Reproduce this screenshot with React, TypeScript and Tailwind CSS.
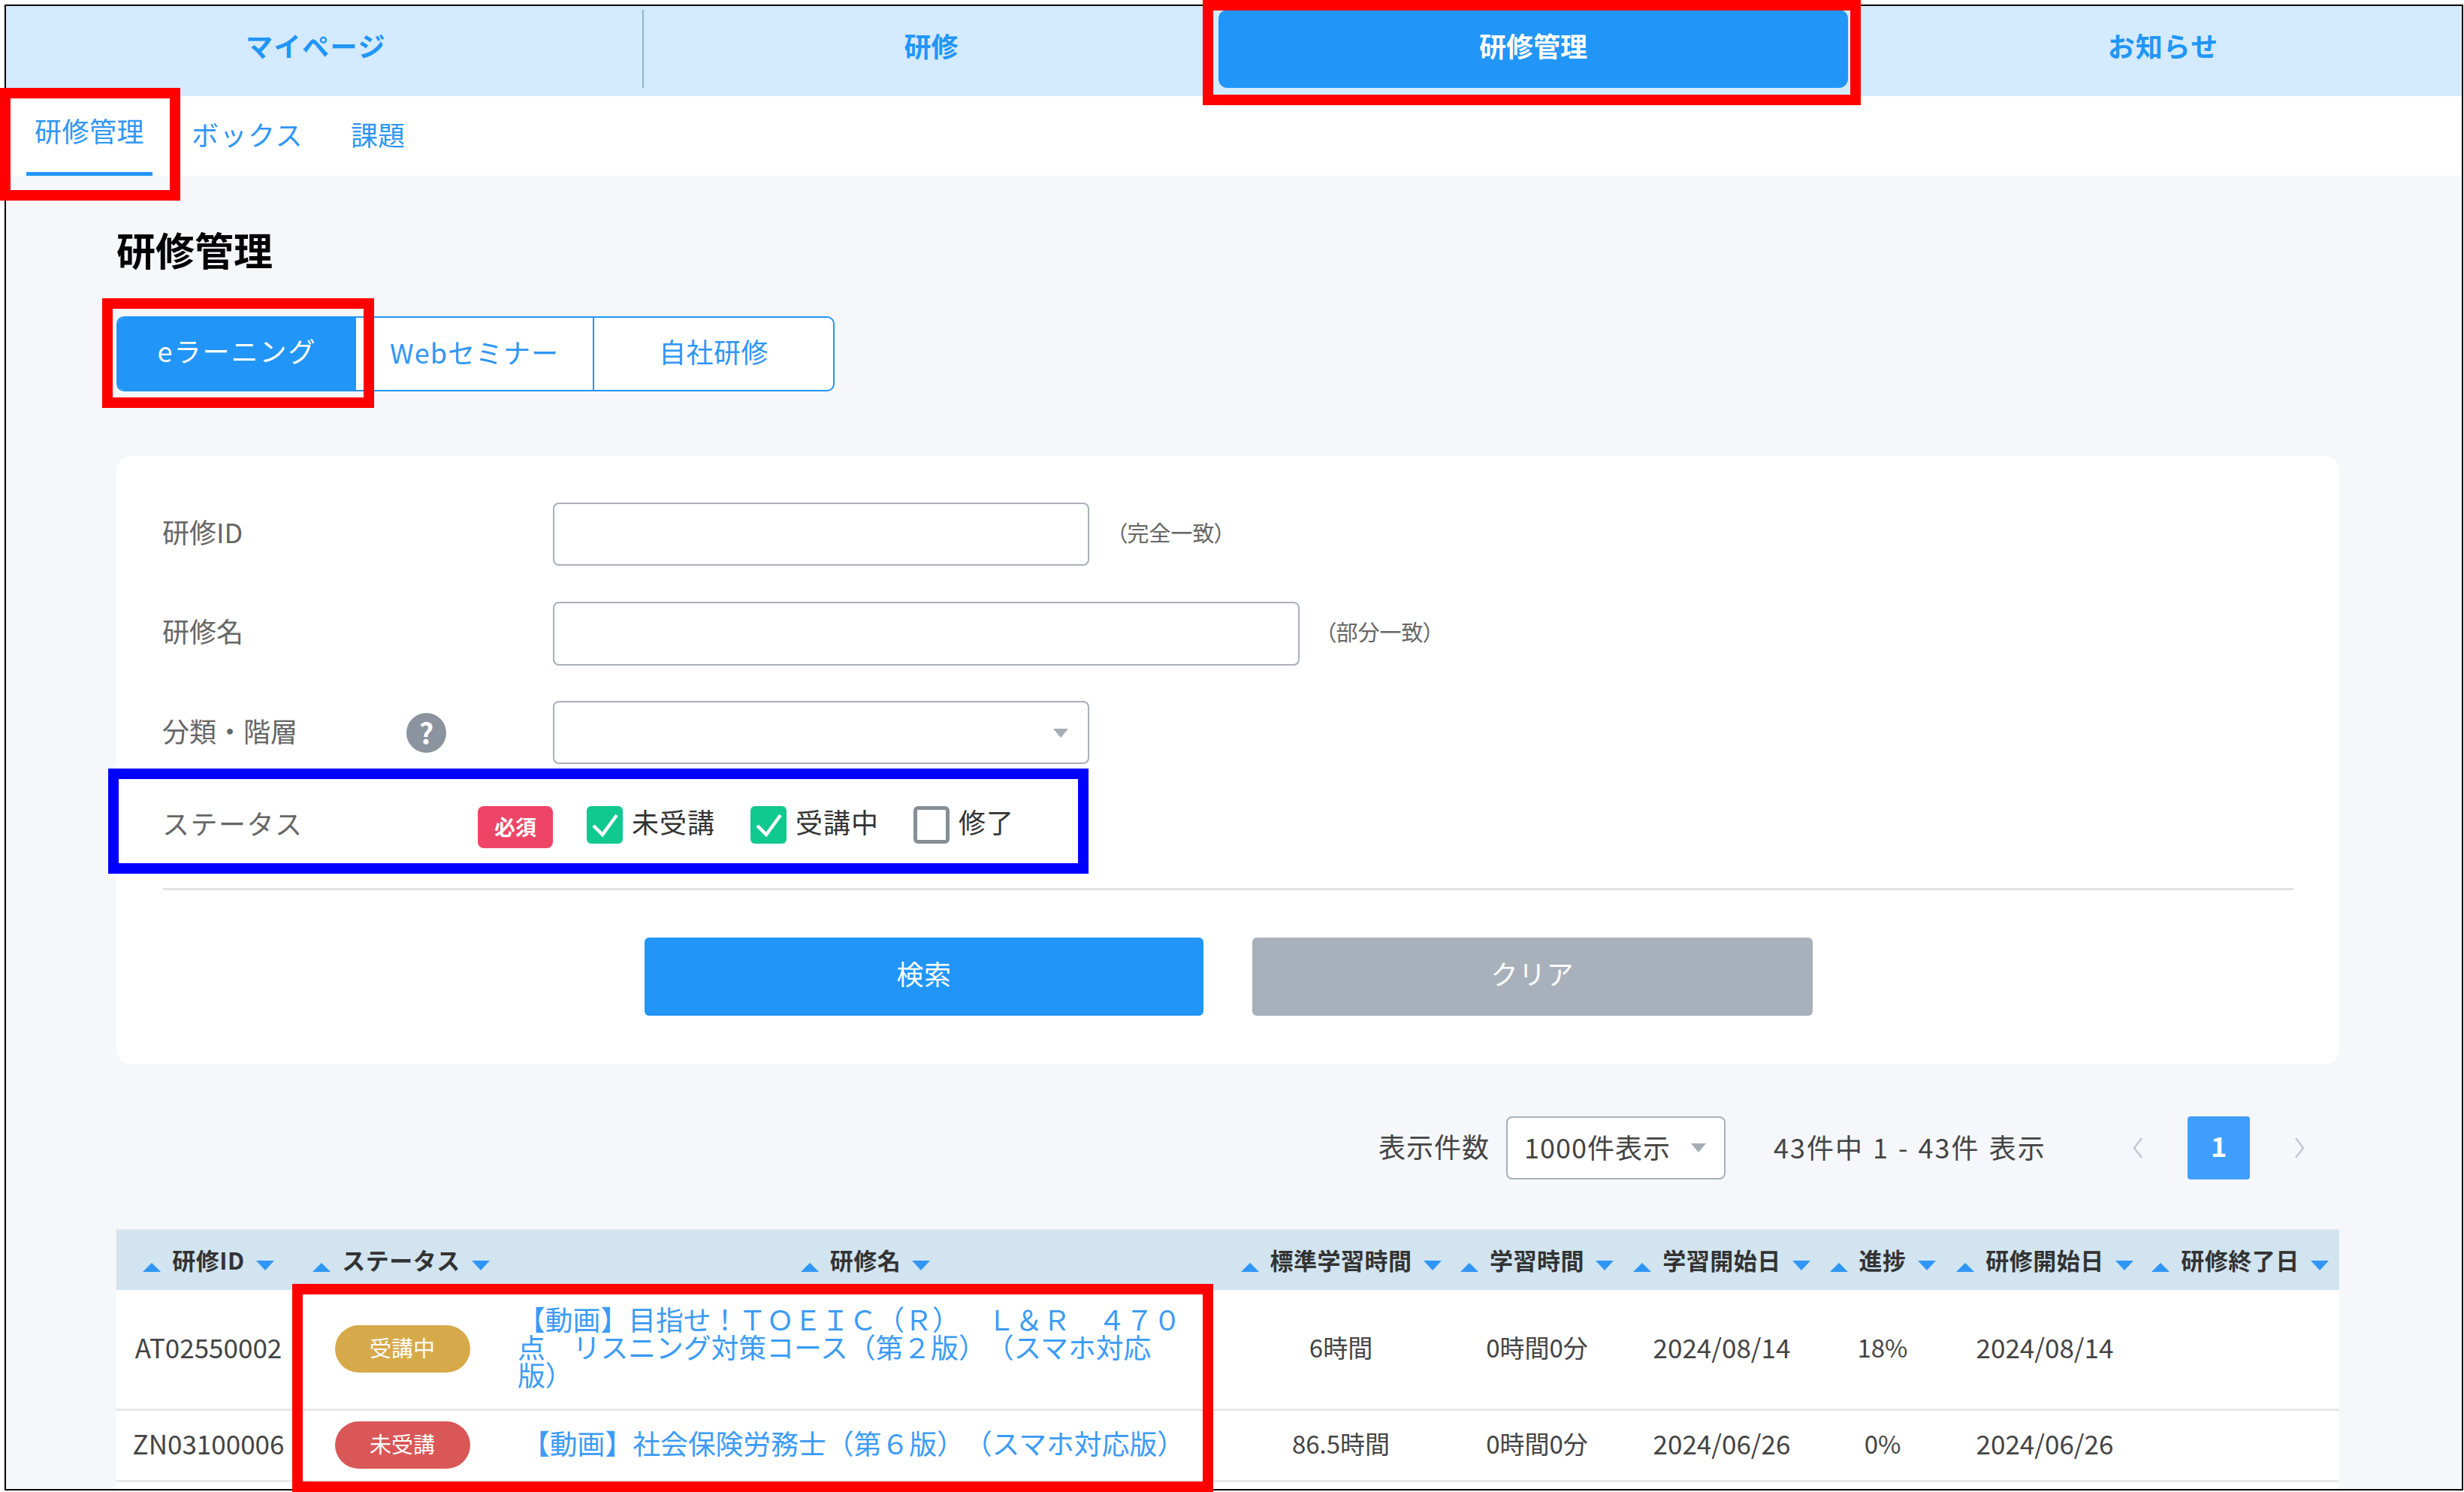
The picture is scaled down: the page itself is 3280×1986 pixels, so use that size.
import React from "react";

const Up = () => (
  <svg width="24" height="12" viewBox="0 0 24 12" className="mt-[22px] shrink-0"><polygon points="12,0 24,12 0,12" fill="#2f96f5" /></svg>
);
const Down = () => (
  <svg width="24" height="13" viewBox="0 0 24 13" className="mt-[19px] shrink-0"><polygon points="0,0 24,0 12,13" fill="#2f96f5" /></svg>
);
const Caret = () => (
  <svg width="20" height="12" viewBox="0 0 20 12" className="shrink-0"><polygon points="0,0 20,0 10,12" fill="#a7adb5" /></svg>
);

const Th = ({ children }: { children: React.ReactNode }) => (
  <div className="flex items-start justify-center pt-[21px] text-[31px] leading-[36px] font-bold text-[#333333] whitespace-nowrap">
    <Up />
    <span className="mr-[15px] ml-[15px] tracking-[0.5px]">{children}</span>
    <Down />
  </div>
);

const Td = ({ children }: { children?: React.ReactNode }) => (
  <div className="flex items-center justify-center pb-[6px] text-[35px] leading-[40px] text-[#444444] whitespace-nowrap">{children}</div>
);

const TdTime = ({ children }: { children: React.ReactNode }) => (
  <div className="flex items-center justify-center pb-[6px] text-[33px] leading-[40px] text-[#444444] whitespace-nowrap">{children}</div>
);

const Check = ({ on }: { on: boolean }) =>
  on ? (
    <span className="flex h-[50px] w-[48px] shrink-0 items-center justify-center rounded-[6px] bg-[#10c98f]">
      <svg width="48" height="50" viewBox="0 0 48 50" fill="none" stroke="#ffffff" strokeWidth="4.5"><polyline points="9,26 21,38 40,12" /></svg>
    </span>
  ) : (
    <span className="h-[50px] w-[48px] shrink-0 rounded-[6px] border-[5px] border-[#868e96] bg-white" />
  );

const Badge = ({ color, children }: { color: string; children: React.ReactNode }) => (
  <span className={`mt-[4px] ml-[3px] flex h-[63px] w-[180px] items-center justify-center rounded-full pb-[4px] text-[29px] text-white ${color}`}>{children}</span>
);

const cols = "grid grid-cols-[245px_268px_968px_298px_224px_268px_160px_272px_257px]";
const trim = "[text-spacing-trim:space-all]";

export default function App() {
  return (
    <div className="relative h-[1986px] w-[3280px] overflow-hidden bg-white pt-[6px] pr-[1px] pb-[2px] pl-[6px] font-['Noto_Sans_CJK_JP','Noto_Sans',sans-serif]">
      <div className="h-full overflow-hidden border-2 border-black bg-[#f5f7fb]">
        {/* top nav */}
        <nav className="flex h-[120px] bg-[#d4eaff] pt-[5px] pb-[11px] text-[36px] font-bold text-[#2196f8]">
          <div className="flex w-[849px] items-center justify-center border-r-2 border-[#8db4d6] pr-[22px] pb-[11px] tracking-[1.5px]">マイページ</div>
          <div className="flex w-[765px] items-center justify-center pb-[10px]">研修</div>
          <div className="flex w-[838px] items-center justify-center rounded-[12px] bg-[#2196f8] pb-[10px] text-white">研修管理</div>
          <div className="flex flex-1 items-center justify-center pb-[10px] pl-[22px] tracking-[1px]">お知らせ</div>
        </nav>
        {/* sub nav */}
        <div className="flex h-[106px] bg-white pl-[27px] text-[36px] text-[#2f96f5]">
          <div className="flex w-[168px] justify-center border-b-[5px] border-[#2196f8] pt-[18px] leading-[54px] tracking-[0.5px]">研修管理</div>
          <div className="ml-[52px] pt-[23px] leading-[54px] tracking-[1.5px]">ボックス</div>
          <div className="ml-[63px] pt-[23px] leading-[54px]">課題</div>
        </div>
        {/* main */}
        <main className="pt-[68px] pr-[163px] pl-[147px]">
          <h1 className="text-[52px] leading-[60px] font-bold text-black">研修管理</h1>
          <div className="mt-[59px] flex h-[100px] w-[956px] overflow-hidden rounded-[10px] border-2 border-[#2196f8] bg-white text-[36px] text-[#2f96f5]">
            <div className="flex w-[317px] items-center justify-center bg-[#2196f8] pb-[10px] tracking-[2px] text-white">eラーニング</div>
            <div className="flex w-[317px] items-center justify-center border-r-2 border-[#2196f8] pb-[6px] tracking-[1px]">Webセミナー</div>
            <div className="flex flex-1 items-center justify-center pb-[8px] tracking-[0.5px]">自社研修</div>
          </div>

          {/* search card */}
          <section className="mt-[86px] h-[810px] rounded-[20px] bg-white px-[61px] pt-[62px] text-[36px] text-[#666666]">
            <div className="flex h-[84px] items-center">
              <div className="w-[520px] pb-[8px]">研修ID</div>
              <div className="h-[84px] w-[714px] rounded-[8px] border-2 border-[#a9b0bb] bg-white" />
              <span className="ml-[36px] pb-[4px] text-[29px] [font-feature-settings:'palt']">（完全一致）</span>
            </div>
            <div className="mt-[48px] flex h-[84px] items-center">
              <div className="w-[520px] pb-[8px]">研修名</div>
              <div className="h-[85px] w-[994px] rounded-[8px] border-2 border-[#a9b0bb] bg-white" />
              <span className="ml-[34px] pb-[4px] text-[29px] [font-feature-settings:'palt']">（部分一致）</span>
            </div>
            <div className="mt-[48px] flex h-[84px] items-center">
              <div className="flex w-[520px] items-center">
                <span className="w-[325px] pb-[6px]">分類・階層</span>
                <span className="flex h-[53px] w-[53px] items-center justify-center rounded-full bg-[#8b939e] text-[38px] leading-none font-bold text-white">?</span>
              </div>
              <div className="flex h-[84px] w-[714px] items-center justify-end rounded-[8px] border-2 border-[#a9b0bb] bg-white pt-[2px] pr-[26px]">
                <Caret />
              </div>
            </div>
            <div className="mt-[49px] flex h-[63px] items-start">
              <div className="w-[420px] pt-[6px] leading-[46px] tracking-[1.5px]">ステータス</div>
              <span className="mt-[7px] flex h-[56px] w-[100px] items-center justify-center rounded-[8px] bg-[#ee4466] pb-[2px] text-[28px] font-bold text-white">必須</span>
              <div className="ml-[45px] flex items-center text-[#333333]">
                <Check on />
                <span className="ml-[12px] w-[158px] pb-[10px] tracking-[1px]">未受講</span>
                <Check on />
                <span className="ml-[12px] w-[157px] pb-[10px] tracking-[1px]">受講中</span>
                <Check on={false} />
                <span className="ml-[12px] pb-[10px] tracking-[1px]">修了</span>
              </div>
            </div>
            <div className="mt-[53px] ml-[1px] h-[3px] bg-[#e2e2e2]" />
            <div className="mt-[63px] ml-[642px] flex gap-[65px] text-white">
              <div className="flex h-[104px] w-[744px] items-center justify-center rounded-[6px] bg-[#2196f8] pb-[10px] tracking-[0.5px]">検索</div>
              <div className="flex h-[104px] w-[746px] items-center justify-center rounded-[6px] bg-[#a8b0bb] pb-[10px] tracking-[1px]">クリア</div>
            </div>
          </section>

          {/* pagination */}
          <div className="mt-[69px] flex h-[84px] items-center justify-end pr-[45px] text-[36px] text-[#444444]">
            <span className="pb-[6px] tracking-[1px]">表示件数</span>
            <div className="ml-[22px] flex h-[84px] w-[292px] items-center justify-between rounded-[8px] border-2 border-[#a9b0bb] bg-white pr-[24px] pl-[22px]">
              <span className="pb-[4px] tracking-[1px] whitespace-nowrap">1000件表示</span>
              <Caret />
            </div>
            <span className="ml-[64px] w-[366px] pb-[4px] tracking-[2px] whitespace-nowrap [word-spacing:2px]">43件中 1 - 43件 表示</span>
            <svg width="16" height="28" viewBox="0 0 16 28" className="ml-[111px]" fill="none" stroke="#c4c8cc" strokeWidth="2.5"><polyline points="13,1 3,14 13,27" /></svg>
            <div className="ml-[58px] flex h-[84px] w-[83px] items-center justify-center rounded-[4px] bg-[#409eff] pb-[8px] font-bold text-white">1</div>
            <svg width="16" height="28" viewBox="0 0 16 28" className="ml-[58px]" fill="none" stroke="#c4c8cc" strokeWidth="2.5"><polyline points="3,1 13,14 3,27" /></svg>
          </div>

          {/* table */}
          <div className="mt-[66px] border-t-2 border-[#e5e7eb]">
            <div className={`${cols} h-[79px] bg-[#d1e4f0]`}>
              <Th>研修ID</Th>
              <Th>ステータス</Th>
              <Th>研修名</Th>
              <Th>標準学習時間</Th>
              <Th>学習時間</Th>
              <Th>学習開始日</Th>
              <Th>進捗</Th>
              <Th>研修開始日</Th>
              <div className="pr-[9px]"><Th>研修終了日</Th></div>
            </div>
            <div className={`${cols} h-[161px] border-b-[3px] border-[#e8e8e8] bg-white`}>
              <Td>AT02550002</Td>
              <Td><Badge color="bg-[#d6a94a]">受講中</Badge></Td>
              <div className={`flex items-center pb-[8px] pl-[21px] text-[36.8px] leading-[37px] text-[#3b9bf5] ${trim}`}>
                <div className="w-[890px]">【動画】目指せ！ＴＯＥＩＣ（Ｒ）　Ｌ＆Ｒ　４７０点　リスニング対策コース（第２版）（スマホ対応版）</div>
              </div>
              <TdTime>6時間</TdTime>
              <TdTime>0時間0分</TdTime>
              <Td>2024/08/14</Td>
              <TdTime>18%</TdTime>
              <Td>2024/08/14</Td>
              <Td />
            </div>
            <div className={`${cols} h-[95px] border-b-[3px] border-[#e8e8e8] bg-white`}>
              <Td>ZN03100006</Td>
              <Td><Badge color="bg-[#d95757]">未受講</Badge></Td>
              <div className={`flex items-center pb-[8px] pl-[27px] text-[36.8px] leading-[37px] whitespace-nowrap text-[#3b9bf5] ${trim}`}>【動画】社会保険労務士（第６版）（スマホ対応版）</div>
              <TdTime>86.5時間</TdTime>
              <TdTime>0時間0分</TdTime>
              <Td>2024/06/26</Td>
              <TdTime>0%</TdTime>
              <Td>2024/06/26</Td>
              <Td />
            </div>
            <div className="h-[20px] bg-white" />
          </div>
        </main>
      </div>

      {/* annotation boxes drawn over the screenshot */}
      <div className="absolute top-0 left-[1601px] h-[140px] w-[876px] border-[14px] border-[#ff0000]" />
      <div className="absolute top-[117px] left-0 h-[150px] w-[240px] border-[14px] border-[#ff0000]" />
      <div className="absolute top-[397px] left-[136px] h-[146px] w-[362px] border-[14px] border-[#ff0000]" />
      <div className="absolute top-[1023px] left-[144px] h-[140px] w-[1305px] border-[14px] border-[#0000ff]" />
      <div className="absolute top-[1709px] left-[389px] h-[277px] w-[1226px] border-[14px] border-[#ff0000]" />
    </div>
  );
}
